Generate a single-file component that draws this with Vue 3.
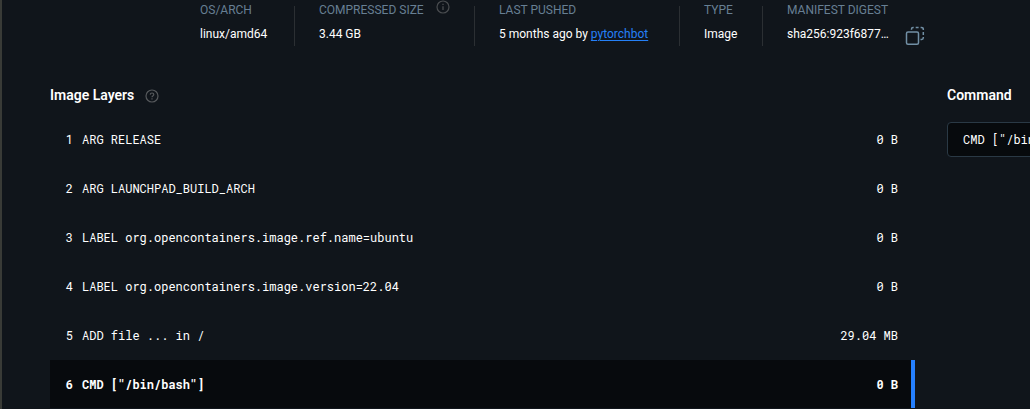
<script setup>
const layers = [
  { command: 'ARG RELEASE', size: '0 B' },
  { command: 'ARG LAUNCHPAD_BUILD_ARCH', size: '0 B' },
  { command: 'LABEL org.opencontainers.image.ref.name=ubuntu', size: '0 B' },
  { command: 'LABEL org.opencontainers.image.version=22.04', size: '0 B' },
  { command: 'ADD file ... in /', size: '29.04 MB' },
  { command: 'CMD ["/bin/bash"]', size: '0 B' },
]
const selected = 5
</script>

<template>
  <main class="page">
    <dl class="summary">
      <div class="fact">
        <dt>OS/ARCH</dt>
        <dd>linux/amd64</dd>
      </div>
      <div class="fact">
        <dt>
          COMPRESSED SIZE
          <svg class="info" viewBox="0 0 14 14" width="14" height="14" fill="none" stroke="currentColor" aria-hidden="true">
            <circle cx="7" cy="7" r="6" stroke-width="1.2" />
            <path d="M7 6.2V10M7 3.7V5" stroke-width="1.3" />
          </svg>
        </dt>
        <dd>3.44 GB</dd>
      </div>
      <div class="fact">
        <dt>LAST PUSHED</dt>
        <dd>5 months ago by <a href="#pytorchbot">pytorchbot</a></dd>
      </div>
      <div class="fact">
        <dt>TYPE</dt>
        <dd>Image</dd>
      </div>
      <div class="fact">
        <dt>MANIFEST DIGEST</dt>
        <dd class="digest">
          sha256:923f6877…
          <button class="copy" type="button" aria-label="Copy digest">
            <svg viewBox="0 0 20 20" width="20" height="20" fill="none" stroke="currentColor" stroke-width="1.5">
              <rect x="1.5" y="6" width="12" height="12.3" rx="1.5" />
              <path d="M6.5 3.7V3Q6.5 1.5 8 1.5H8.7M10.7 1.5H13.6M15.6 1.5H16.5Q18.3 1.5 18.3 3.2V4M18.3 6V9M18.3 11V11.8Q18.3 13.5 16.6 13.5H15.5" />
            </svg>
          </button>
        </dd>
      </div>
    </dl>

    <div class="columns">
      <section>
        <h2>
          Image Layers
          <svg class="help" viewBox="0 0 14 14" width="14" height="14" fill="none" stroke="currentColor" aria-hidden="true">
            <circle cx="7" cy="7" r="6" stroke-width="1.2" />
            <path d="M5.2 5.6Q5.3 4 7 4Q8.8 4 8.8 5.5Q8.8 6.3 7.8 6.9Q7 7.4 7 8.3M7 9.3V10.5" stroke-width="1.2" />
          </svg>
        </h2>
        <table>
          <tbody>
            <tr v-for="(layer, i) in layers" :key="i" :class="{ selected: i === selected }">
              <td class="number">{{ i + 1 }}</td>
              <td class="instruction">{{ layer.command }}</td>
              <td class="size">{{ layer.size }}</td>
            </tr>
          </tbody>
        </table>
      </section>
      <section>
        <h2>Command</h2>
        <pre class="command"><code>{{ layers[selected].command }}</code></pre>
      </section>
    </div>
  </main>
</template>

<style>
body {
  margin: 0;
  background: #10151b;
}
</style>

<style scoped>
.page {
  box-sizing: border-box;
  min-height: 100vh;
  padding-left: 48px;
  border-left: 2px solid #393b37;
  overflow: hidden;
  background: #10151b;
  color: #fff;
  font-family: Roboto, sans-serif;
  font-size: 12px;
  line-height: 20px;
}
.summary {
  display: grid;
  grid-template-columns: 95px 156px 181px 59px auto;
  justify-content: start;
  column-gap: 24px;
  margin: 0 0 0 150px;
}
.fact {
  position: relative;
  white-space: nowrap;
}
.fact:not(:last-child)::after {
  content: "";
  position: absolute;
  top: 6px;
  right: 0;
  bottom: -2px;
  width: 1px;
  background: #2b2f33;
}
dt {
  display: flex;
  height: 20px;
  color: #677f93;
}
.info {
  margin-left: 12px;
  color: #4a4d50;
}
dd {
  margin: 4px 0 0;
}
a {
  color: #2580f7;
  text-underline-offset: 2px;
}
.digest {
  display: flex;
  height: 20px;
}
.copy {
  display: flex;
  height: 20px;
  margin: 2px 0 0 16px;
  padding: 0;
  border: 0;
  background: none;
  color: #718fa5;
}
.columns {
  display: grid;
  grid-template-columns: minmax(0, 1fr) 83px;
  gap: 32px;
  margin-top: 41px;
}
h2 {
  display: flex;
  align-items: center;
  gap: 11px;
  margin: 0;
  font-size: 14px;
  line-height: 20px;
  font-weight: 600;
}
.help {
  margin-top: 2px;
  color: #56595c;
}
table {
  width: 100%;
  margin-top: 10px;
  border-collapse: separate;
  border-spacing: 0;
  font-family: "Roboto Mono", "DejaVu Sans Mono", monospace;
}
td {
  height: 48px;
  padding: 0;
  border-bottom: 1px solid transparent;
  background-clip: padding-box;
  white-space: nowrap;
}
.number {
  width: 23px;
  text-align: right;
}
.instruction {
  padding-left: 9px;
}
.size {
  padding-right: 13px;
  border-right: 4px solid transparent;
  text-align: right;
}
.selected td {
  background-color: #070a0d;
  border-bottom: 0;
  font-weight: 700;
}
.selected .size {
  border-right-color: #2580ff;
}
.command {
  width: 160px;
  margin: 17px 0 0;
  padding: 7px 15px;
  border: 1px solid #2a3945;
  border-radius: 4px;
  background: #070a0d;
  line-height: 19px;
}
.command code {
  display: block;
  font-family: "Roboto Mono", "DejaVu Sans Mono", monospace;
  font-size: 12px;
}
</style>
